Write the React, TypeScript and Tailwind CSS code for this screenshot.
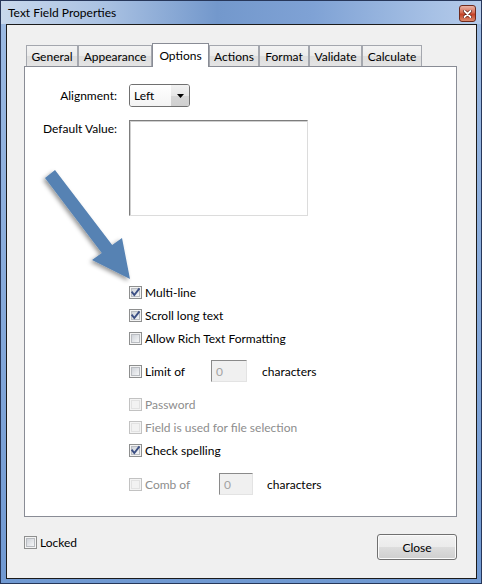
import React from "react";

function Check({ checked = false, disabled = false }: { checked?: boolean; disabled?: boolean }) {
  return (
    <svg width="13" height="13" viewBox="0 0 13 13" className="shrink-0 block">
      <rect x="0.5" y="0.5" width="12" height="12" fill="#f4f4f4" stroke={disabled ? "#c2c2c2" : "#8e8f8f"} />
      <rect x="2.5" y="2.5" width="8" height="8" fill={disabled ? "#f2f2f2" : "url(#cbfill)"} stroke={disabled ? "#e2e2e2" : "#b9bcc1"} />
      {checked && (
        <path
          d="M3.2 6.4 L5.3 9 L9.9 3.1"
          fill="none"
          stroke={disabled ? "#9aa0a8" : "#3c4f84"}
          strokeWidth="1.9"
          strokeLinecap="square"
          strokeLinejoin="miter"
        />
      )}
    </svg>
  );
}

function Row({
  checked,
  disabled,
  label,
}: {
  checked?: boolean;
  disabled?: boolean;
  label: string;
}) {
  return (
    <div className="flex items-center h-[23px] gap-[3px]">
      <Check checked={checked} disabled={disabled} />
      <span className={disabled ? "text-[#8d8d8d]" : "text-black"}>{label}</span>
    </div>
  );
}

function SmallInput({ w }: { w: string }) {
  return (
    <div
      className={`${w} h-[22px] bg-[#f0f0f0] border border-t-[#8a8a8a] border-l-[#8a8a8a] border-r-[#e3e3e3] border-b-[#e3e3e3] flex items-center pl-[4px] text-[#a3a3a3]`}
    >
      0
    </div>
  );
}

const tabs = [
  { name: "General", w: "w-[52px]" },
  { name: "Appearance", w: "w-[74px]" },
  { name: "Options", w: "w-[57px]", active: true },
  { name: "Actions", w: "w-[50px]" },
  { name: "Format", w: "w-[50px]" },
  { name: "Validate", w: "w-[53px]" },
  { name: "Calculate", w: "w-[60px]" },
];

export default function App() {
  return (
    <div className="w-[482px] h-[585px] bg-white font-['Lato','Liberation_Sans',sans-serif] text-[12px] leading-[15px] text-black">
      <svg width="0" height="0" className="absolute">
        <defs>
          <linearGradient id="cbfill" x1="0" y1="0" x2="1" y2="1">
            <stop offset="0" stopColor="#cdd1d7" />
            <stop offset="1" stopColor="#f7f8f9" />
          </linearGradient>
          <filter id="ashadow" x="-20%" y="-20%" width="140%" height="140%">
            <feDropShadow dx="-2" dy="2" stdDeviation="2" floodColor="#000" floodOpacity="0.4" />
          </filter>
        </defs>
      </svg>

      <div className="w-[482px] h-[584px] border border-[#27375a] flex flex-col bg-[linear-gradient(to_bottom,#9dbbe3,#7099d2)]">
        {/* title bar */}
        <div className="h-[23px] shrink-0 flex items-center justify-between pl-[7px] pr-[5px] bg-[linear-gradient(to_right,#c8d8ec_0%,#a9c1e2_22%,#7398cc_45%,#7fa2d5_65%,#a7c1e5_90%,#b5cbea_100%)]">
          <span className="text-black">Text Field Properties</span>
          <div className="w-[17px] h-[17px] mt-[2px] rounded-[3px] border border-[#6e2a1c] flex items-center justify-center bg-[linear-gradient(to_bottom,#eab3a6_0%,#d46a51_45%,#c44126_55%,#dc8a6e_100%)]">
            <svg width="9" height="8" viewBox="0 0 9 8">
              <path d="M1.5 1 L7.5 7 M7.5 1 L1.5 7" stroke="#5a1a10" strokeWidth="3.2" strokeLinecap="round" />
              <path d="M1.5 1 L7.5 7 M7.5 1 L1.5 7" stroke="#ffffff" strokeWidth="1.8" strokeLinecap="round" />
            </svg>
          </div>
        </div>

        {/* client area */}
        <div className="flex-1 ml-[5px] mr-[4px] mb-[4px] border border-[#1b1b1b] bg-[#f0f0f0] flex flex-col pt-[18px] pl-[17px]">
          {/* tab strip */}
          <div className="flex items-end h-[23px] pl-[2px]">
            {tabs.map((t) =>
              t.active ? (
                <div
                  key={t.name}
                  className={`${t.w} h-[24px] translate-y-px relative z-10 bg-white border border-b-0 border-[#898c95] flex items-center justify-center pb-[1px]`}
                >
                  {t.name}
                </div>
              ) : (
                <div
                  key={t.name}
                  className={`${t.w} h-[21px] border border-b-0 border-[#a4a7ae] flex items-center justify-center bg-[linear-gradient(to_bottom,#f3f3f3_0%,#ebebeb_50%,#dedede_51%,#e4e4e4_100%)]`}
                >
                  {t.name}
                </div>
              )
            )}
          </div>

          {/* panel */}
          <div className="relative w-[433px] h-[451px] border border-[#898c95] bg-white pt-[17px]">
            <div className="flex items-center h-[23px]">
              <div className="w-[92px] text-right">Alignment:</div>
              <div className="ml-[12px] w-[61px] h-[23px] rounded-[3px] border border-[#707070] flex overflow-hidden">
                <div className="flex-1 flex items-center pl-[4px] bg-[linear-gradient(to_bottom,#ffffff,#f3f3f3)]">
                  Left
                </div>
                <div className="w-[18px] flex items-center justify-center bg-[linear-gradient(to_bottom,#f2f2f2_0%,#e6e6e6_50%,#d6d6d6_51%,#cfcfcf_100%)]">
                  <svg width="7" height="4" viewBox="0 0 7 4">
                    <path d="M0 0 L7 0 L3.5 4 Z" fill="#000" />
                  </svg>
                </div>
              </div>
            </div>

            <div className="flex mt-[13px]">
              <div className="w-[92px] text-right pt-[1px]">Default Value:</div>
              <div className="ml-[12px] w-[179px] h-[96px] bg-white border border-t-[#7d7d7d] border-l-[#7d7d7d] border-r-[#dcdcdc] border-b-[#dcdcdc] shadow-[inset_1px_1px_0_#cfcfcf]" />
            </div>

            <div className="pl-[104px] mt-[65px] flex flex-col">
              <Row checked label="Multi-line" />
              <Row checked label="Scroll long text" />
              <Row label="Allow Rich Text Formatting" />

              <div className="flex items-center h-[22px] mt-[10px]">
                <Check />
                <span className="ml-[3px] w-[66px]">Limit of</span>
                <SmallInput w="w-[36px]" />
                <span className="ml-[15px]">characters</span>
              </div>

              <div className="mt-[11px]">
                <Row disabled label="Password" />
                <Row disabled label="Field is used for file selection" />
                <Row checked label="Check spelling" />
              </div>

              <div className="flex items-center h-[22px] mt-[11px]">
                <Check disabled />
                <span className="ml-[3px] w-[74px] text-[#8d8d8d]">Comb of</span>
                <SmallInput w="w-[34px]" />
                <span className="ml-[14px]">characters</span>
              </div>
            </div>

            {/* annotation arrow */}
            <svg
              className="absolute left-0 top-0 pointer-events-none overflow-visible"
              width="431"
              height="449"
              viewBox="0 0 431 449"
            >
              <polygon
                points="20,111 30,103 87.2,178.1 97,171 105,212 67,193 76.8,185.9"
                fill="#5682b3"
                filter="url(#ashadow)"
              />
            </svg>
          </div>

          {/* bottom row */}
          <div className="w-[433px] mt-[17px] flex justify-between items-start">
            <div className="flex items-center gap-[3px] mt-[2px] h-[13px]">
              <Check />
              <span>Locked</span>
            </div>
            <div className="w-[80px] h-[26px] rounded-[3px] border border-[#707070] shadow-[inset_0_0_0_1px_#fbfbfb] flex items-center justify-center bg-[linear-gradient(to_bottom,#f2f2f2_0%,#ebebeb_50%,#dddddd_51%,#cfcfcf_100%)]">
              Close
            </div>
          </div>
        </div>
      </div>
    </div>
  );
}
